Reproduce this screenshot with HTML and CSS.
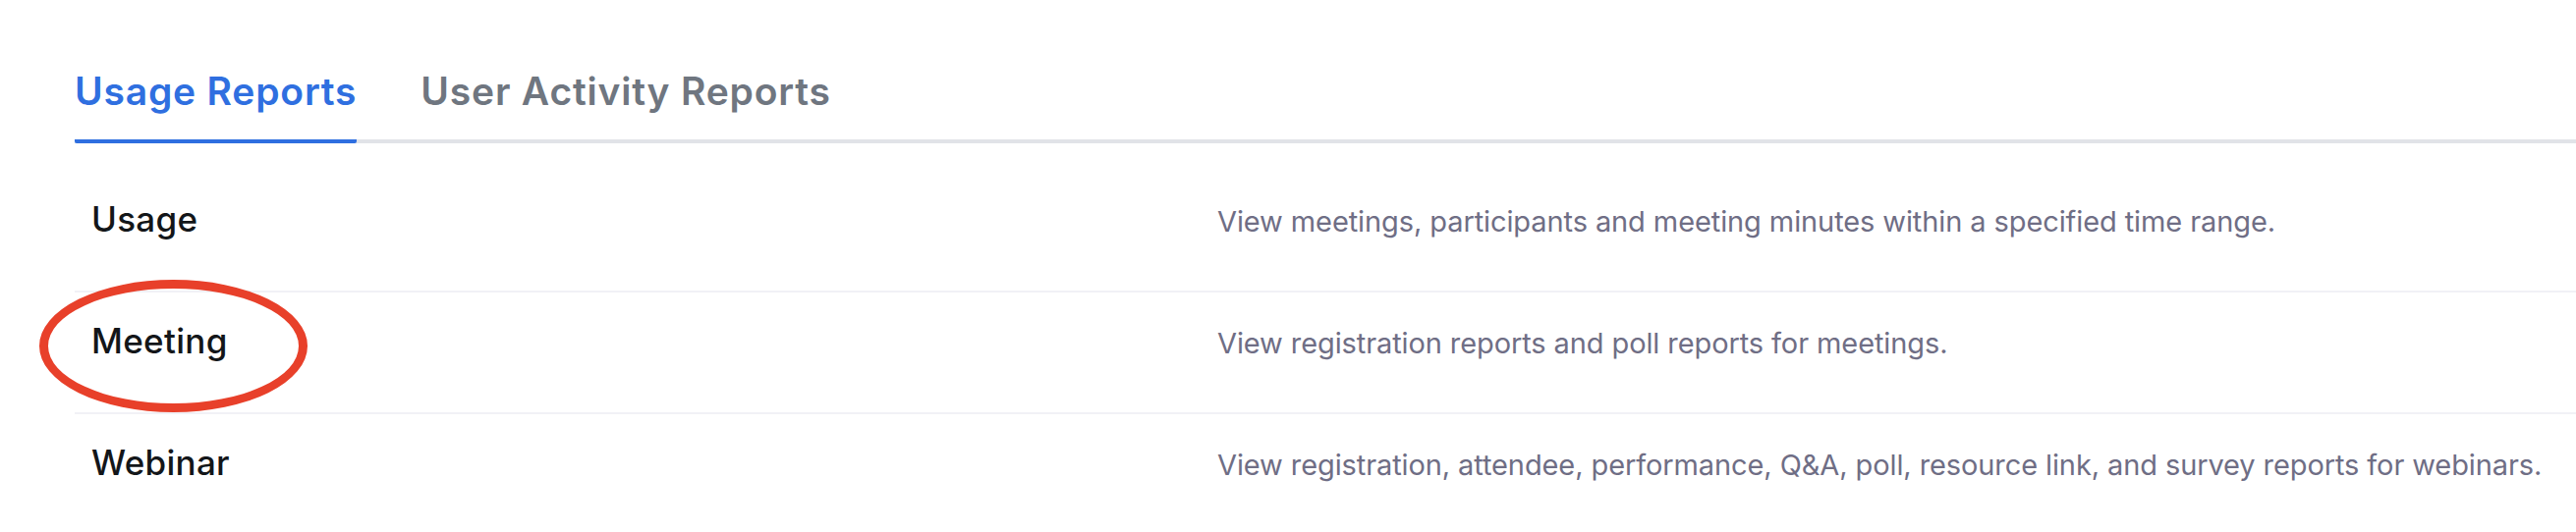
FILE: index.html
```html
<!DOCTYPE html>
<html lang="en">
<head>
<meta charset="utf-8">
<title>Reports</title>
<link rel="stylesheet" href="styles.css">
</head>
<body>
<div class="page">
  <nav class="tabs">
    <a class="tab tab-active">Usage Reports</a>
    <a class="tab">User Activity Reports</a>
  </nav>
  <div class="list">
    <div class="row">
      <div class="row-title">Usage</div>
      <div class="row-desc">View meetings, participants and meeting minutes within a specified time range.</div>
    </div>
    <div class="row">
      <div class="row-title">Meeting</div>
      <div class="row-desc">View registration reports and poll reports for meetings.</div>
    </div>
    <div class="row">
      <div class="row-title">Webinar</div>
      <div class="row-desc">View registration, attendee, performance, Q&amp;A, poll, resource link, and survey reports for webinars.</div>
    </div>
  </div>
  <div class="annotation"></div>
</div>
</body>
</html>
```

FILE: styles.css
```css
html, body {
  margin: 0;
  padding: 0;
  background: #ffffff;
}

body {
  font-family: Inter, "Noto Sans", "Liberation Sans", sans-serif;
  -webkit-font-smoothing: antialiased;
}

.page {
  position: relative;
  padding: 70px 0 0 76px;
}

.tabs {
  display: flex;
  gap: 65px;
  border-bottom: 4px solid #e1e3e8;
}

.tab {
  display: block;
  font-size: 39px;
  line-height: 46px;
  font-weight: 600;
  letter-spacing: 0.8px;
  color: #6f7680;
  padding-bottom: 26px;
  margin-bottom: -4px;
  border-bottom: 4px solid transparent;
  cursor: pointer;
}

.tab-active {
  color: #2f6fe0;
  border-bottom-color: #2f6fe0;
  border-radius: 0 0 2px 2px;
}

.list {
  margin-top: 28px;
}

.row {
  display: grid;
  grid-template-columns: 1146px 1fr;
  align-items: baseline;
  box-sizing: border-box;
  height: 124px;
  padding: 31px 0 0 17px;
  border-bottom: 2px solid #f1f1f6;
}

.row:last-child {
  border-bottom: 0;
}

.row-title {
  font-size: 35px;
  line-height: 36px;
  font-weight: 500;
  letter-spacing: 0.3px;
  color: #131619;
}

.row-desc {
  font-size: 29px;
  line-height: 36px;
  font-weight: 400;
  letter-spacing: -0.1px;
  color: #6f6e85;
  white-space: nowrap;
}

.annotation {
  position: absolute;
  left: 40px;
  top: 285px;
  width: 255px;
  height: 117px;
  border: 9px solid #e8402a;
  border-radius: 50%;
  pointer-events: none;
}
```
